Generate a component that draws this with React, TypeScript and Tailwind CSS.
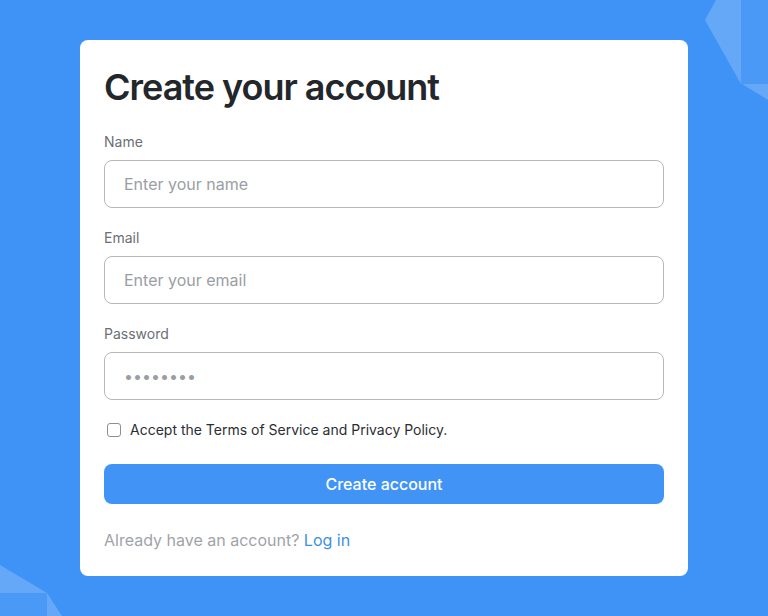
import React from "react";

export default function App() {
  return (
    <div className="relative min-h-screen w-full overflow-hidden bg-[#3f93f6] py-10" style={{ fontFamily: "Inter, 'Noto Sans', sans-serif" }}>
      <svg className="absolute right-0 top-0" width="68" height="110" viewBox="700 0 68 110">
        <rect x="741" y="0" width="27" height="84" fill="#ffffff" fillOpacity="0.06" />
        <polygon points="716,0 741,0 741,84 705,20" fill="#ffffff" fillOpacity="0.2" />
        <polygon points="742,84 768,84 768,100" fill="#ffffff" fillOpacity="0.2" />
      </svg>
      <svg className="absolute bottom-0 left-0" width="70" height="61" viewBox="0 555 70 61">
        <polygon points="0,565 47,593 0,593" fill="#ffffff" fillOpacity="0.2" />
        <rect x="0" y="593" width="47" height="23" fill="#ffffff" fillOpacity="0.06" />
        <polygon points="47,593 62,616 47,616" fill="#ffffff" fillOpacity="0.2" />
      </svg>
      <div className="relative mx-auto w-[608px] rounded-lg bg-white px-6 pb-6 pt-[27px]">
        <h1 className="text-4xl font-semibold leading-10 tracking-[-0.028em] text-[#23272b]">Create your account</h1>
        <label className="mt-[25px] block text-sm leading-5 text-[#6b6f75]">Name</label>
        <input
          className="mt-2 block h-12 w-full rounded-lg border border-[#b5b8bc] px-[19px] text-base text-[#23272b] outline-none placeholder:text-[#9a9ea4]"
          placeholder="Enter your name"
        />
        <label className="mt-5 block text-sm leading-5 text-[#6b6f75]">Email</label>
        <input
          className="mt-2 block h-12 w-full rounded-lg border border-[#b5b8bc] px-[19px] text-base text-[#23272b] outline-none placeholder:text-[#9a9ea4]"
          placeholder="Enter your email"
        />
        <label className="mt-5 block text-sm leading-5 text-[#6b6f75]">Password</label>
        <input
          className="mt-2 block h-12 w-full rounded-lg border border-[#b5b8bc] px-[19px] text-base text-[#23272b] outline-none placeholder:text-[#9a9ea4]"
          placeholder="••••••••"
        />
        <div className="mt-5 flex h-5 items-center">
          <span className="ml-[3px] mr-[9px] block h-[14px] w-[14px] rounded-[3px] border border-[#8c9095] bg-white" />
          <span className="text-sm leading-5 text-[#2a2e33]">Accept the Terms of Service and Privacy Policy.</span>
        </div>
        <button className="mt-6 flex h-10 w-full items-center justify-center rounded-lg bg-[#4194f6] text-base font-medium text-white">
          Create account
        </button>
        <p className="mt-6 text-base leading-6 text-[#9fa3a8]">
          Already have an account? <span className="text-[#3b8fe6]">Log in</span>
        </p>
      </div>
    </div>
  );
}
